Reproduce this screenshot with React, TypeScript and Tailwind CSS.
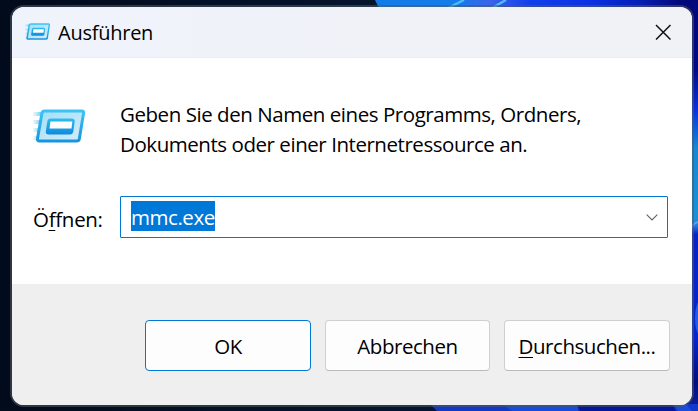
import type { ReactNode } from "react";

function Wallpaper() {
  return (
    <svg className="absolute inset-0 h-full w-full" viewBox="0 0 698 411" preserveAspectRatio="none" aria-hidden="true">
      <defs>
        <linearGradient id="night" x1="0" x2="1">
          <stop offset="0" stopColor="#020b1c" />
          <stop offset="1" stopColor="#071c3b" />
        </linearGradient>
        <linearGradient id="petals" gradientUnits="userSpaceOnUse" x1="375" y1="0" x2="698" y2="0">
          <stop offset="0" stopColor="#117ce8" />
          <stop offset="0.25" stopColor="#167cea" />
          <stop offset="0.36" stopColor="#3b62ea" />
          <stop offset="0.48" stopColor="#123fec" />
          <stop offset="0.68" stopColor="#0b30e2" />
          <stop offset="0.82" stopColor="#0620b4" />
          <stop offset="0.94" stopColor="#02087c" />
          <stop offset="1" stopColor="#020878" />
        </linearGradient>
        <linearGradient id="edge" gradientUnits="userSpaceOnUse" x1="0" y1="0" x2="0" y2="411">
          <stop offset="0" stopColor="#020878" />
          <stop offset="0.17" stopColor="#020a84" />
          <stop offset="0.27" stopColor="#0834df" />
          <stop offset="0.36" stopColor="#1687d2" />
          <stop offset="0.53" stopColor="#1b91d4" />
          <stop offset="0.55" stopColor="#2676dc" />
          <stop offset="0.57" stopColor="#0622c4" />
          <stop offset="0.82" stopColor="#0426ce" />
          <stop offset="0.93" stopColor="#031078" />
          <stop offset="1" stopColor="#0622a0" />
        </linearGradient>
      </defs>
      <rect width="698" height="411" fill="url(#night)" />
      <path d="M375 0H698V10H380Z" fill="url(#petals)" />
      <path d="M448 8 464 0M492 8 506 0" stroke="#4dbcf0" strokeWidth="2.5" />
      <rect x="688" y="5" width="10" height="406" fill="url(#edge)" />
      <path d="M691 228Q694 223 698 222" stroke="#55a2ec" strokeWidth="2" fill="none" />
      <ellipse cx="700" cy="318" rx="5" ry="17" fill="#215ce4" />
      <path d="M430 404H698V411H437Z" fill="#1238c8" />
      <path d="M502 404H578V411H512Z" fill="#164bdc" />
      <path d="M576 404H672L676 411H580Z" fill="#04169a" />
      <path d="M674 404H686L692 411H678Z" fill="#174cdd" />
    </svg>
  );
}

function RunIcon({ id, className }: { id: string; className: string }) {
  return (
    <svg className={className} viewBox="0 0 52 34" preserveAspectRatio="none" aria-hidden="true">
      <defs>
        <linearGradient id={`${id}-frame`} x1="0" y1="0" x2="0" y2="1">
          <stop offset="0" stopColor="#3cc4f4" />
          <stop offset="1" stopColor="#1995df" />
        </linearGradient>
        <linearGradient id={`${id}-glass`} x1="0" y1="0" x2="1" y2="1">
          <stop offset="0" stopColor="#a5def6" />
          <stop offset="1" stopColor="#d2edfb" />
        </linearGradient>
        <linearGradient id={`${id}-speed`} x1="0" x2="1">
          <stop offset="0" stopColor="#58c8f2" stopOpacity="0.1" />
          <stop offset="1" stopColor="#42b9ed" stopOpacity="0.8" />
        </linearGradient>
        <linearGradient id={`${id}-screen`} x1="0" y1="0" x2="0" y2="1">
          <stop offset="0" stopColor="#2cbdf0" />
          <stop offset="1" stopColor="#108bdc" />
        </linearGradient>
      </defs>
      <path d="M0 3H9V7H0ZM0 11H8V15H0ZM0 19H6V23H0ZM0 27H5V31H0Z" fill={`url(#${id}-speed)`} />
      <path d="M11.5 2H49Q51 2 50.5 4.5L46.3 30Q45.9 32 43.5 32H6.5Q4 32 4.5 29.5L9 4Q9.5 2 11.5 2Z" fill={`url(#${id}-glass)`} stroke={`url(#${id}-frame)`} strokeWidth="3" strokeLinejoin="round" />
      <path d="M17.5 9.5H38.5Q42 9.500 41.700 12.500L40.300 22.500Q39.800 25.500 37 25.500H15.500Q12.500 25.500 12.800 22.500L14.300 12.500Q14.800 9.500 17.500 9.500Z" fill={`url(#${id}-screen)`} />
      <path d="M17.5 12.500H39.300L38.500 19.500H16.500Z" fill="#fff" />
    </svg>
  );
}

function DialogButton({ children, className }: { children: ReactNode; className: string }) {
  return (
    <button className={`flex h-[51px] items-center justify-center rounded-[4px] border bg-[#fdfdfd] ${className}`}>
      <span className="whitespace-nowrap tracking-[-0.45px]">{children}</span>
    </button>
  );
}

export default function App() {
  return (
    <main className="relative h-[411px] w-[698px] overflow-hidden bg-[#020b1c] pl-[10px] pt-[5px] font-['Open_Sans','Noto_Sans',sans-serif] text-[20.5px] leading-[30px] text-black">
      <Wallpaper />
      <section className="relative h-[402px] w-[684px] rounded-[14px] bg-[#50586090] p-[2px]">
        <div className="flex h-full flex-col overflow-hidden rounded-[12px] bg-white">
          <header className="flex h-[51px] shrink-0 items-center border-b border-[#ececee] bg-gradient-to-r from-[#eff3fb] to-[#f1f2f6] pl-[13px] pr-[21px]">
            <RunIcon id="title" className="mb-[2px] h-[17px] w-[25px]" />
            <h1 className="ml-[8px] pt-[2px] text-[20px] tracking-[-0.25px]">Ausführen</h1>
            <button className="-mt-px ml-auto" aria-label="Schließen">
              <svg className="h-[16px] w-[16px]" viewBox="0 0 16 16" fill="none" stroke="#111" strokeWidth="1.5">
                <path d="M1 1 15.5 15.5M15.5 1 1 15.5" />
              </svg>
            </button>
          </header>

          <div className="h-[226px] shrink-0 pl-[21px] pr-[24px] pt-[41px]">
            <div className="flex">
              <RunIcon id="body" className="mt-[10px] h-[34px] w-[52px]" />
              <p className="ml-[35px] whitespace-nowrap tracking-[-0.45px]">
                Geben Sie den Namen eines Programms, Ordners,
                <br />
                Dokuments oder einer Internetressource an.
              </p>
            </div>
            <div className="mt-[37px] flex items-center">
              <label className="w-[87px] shrink-0 whitespace-nowrap pt-[4px] tracking-[-0.3px]">
                Ö<span className="underline decoration-1 underline-offset-[3px]">f</span>fnen:
              </label>
              <div className="flex h-[42px] flex-1 items-center rounded-[1px] border border-[#0078d4] bg-white pl-[10px] pr-[9px]">
                <span className="mb-[2px] h-[30px] w-[84px] whitespace-nowrap bg-[#0078d7] leading-[32px] tracking-[-0.45px] text-white">mmc.exe</span>
                <svg className="ml-auto h-[7px] w-[12px]" viewBox="0 0 12 7" fill="none" stroke="#606060" strokeWidth="1.1">
                  <path d="M.7.7 6 6 11.3.7" />
                </svg>
              </div>
            </div>
          </div>

          <footer className="flex flex-1 justify-end bg-[#efefef] pr-[22px] pt-[36px]">
            <DialogButton className="w-[166px] border-[#0078d4]">OK</DialogButton>
            <DialogButton className="ml-[14px] w-[165px] border-[#d0d0d0] border-b-[#bababa]">Abbrechen</DialogButton>
            <DialogButton className="ml-[14px] w-[166px] border-[#d0d0d0] border-b-[#bababa]">
              <span className="underline decoration-1 underline-offset-[3px]">D</span>urchsuchen...
            </DialogButton>
          </footer>
        </div>
      </section>
    </main>
  );
}
